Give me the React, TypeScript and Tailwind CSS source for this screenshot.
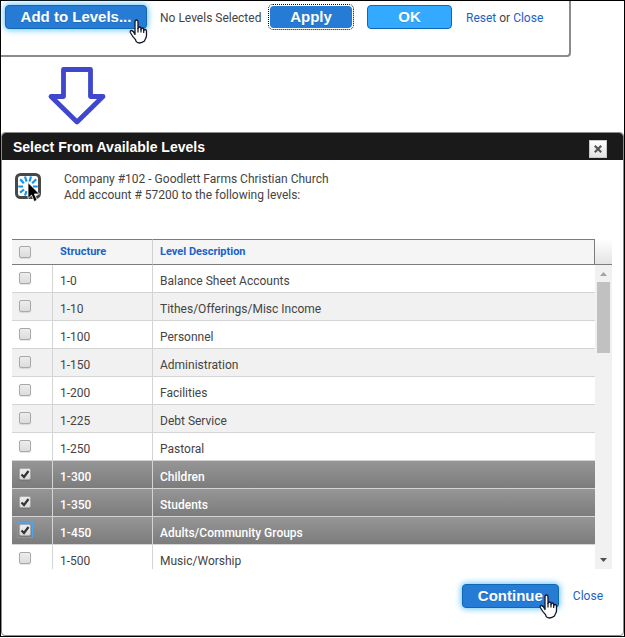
import { useState } from 'react'
import type { ReactNode } from 'react'
import clsx from 'clsx'

const LEVELS = [
  { structure: '1-0', description: 'Balance Sheet Accounts' },
  { structure: '1-10', description: 'Tithes/Offerings/Misc Income' },
  { structure: '1-100', description: 'Personnel' },
  { structure: '1-150', description: 'Administration' },
  { structure: '1-200', description: 'Facilities' },
  { structure: '1-225', description: 'Debt Service' },
  { structure: '1-250', description: 'Pastoral' },
  { structure: '1-300', description: 'Children' },
  { structure: '1-350', description: 'Students' },
  { structure: '1-450', description: 'Adults/Community Groups' },
  { structure: '1-500', description: 'Music/Worship' },
]

const BUTTON =
  'relative rounded border text-center font-["Liberation_Sans",Arial,sans-serif] text-[15px] leading-[22px] font-bold text-white text-shadow-2xs'
const GLOW = 'shadow-[0_0_6px_1px_#6cc4ff]'

function HandCursor({ className }: { className: string }) {
  return (
    <svg className={clsx('pointer-events-none absolute h-[25px] w-[19px]', className)} viewBox="0 0 19 25" aria-hidden="true">
      <path
        d="M6 15.5V3Q6 1 7.5 1T9 3v6.5Q9 8 10.5 8T12 9.5v1Q12 9 13.3 9t1.4 1.7v1q.2-1.2 1.4-1.2t1.4 1.5v4.5c0 3-1.8 3.6-2 5.6Q13 24 10.5 24T7 22.200c0-2-2.200-3-3.500-5.200L1.300 13.500Q.8 11.500 2.500 11.500q2 .3 3.500 4z"
        fill="#fff"
        stroke="#15152b"
        strokeWidth="1.300"
        strokeLinejoin="round"
      />
      <path d="M9 9v4.500M12 10v3.500M14.700 11v3" stroke="#15152b" strokeWidth="1.200" fill="none" />
    </svg>
  )
}

function ActionButton({ children, className }: { children: ReactNode; className?: string }) {
  return (
    <button type="button" className={clsx(BUTTON, className)}>
      {children}
    </button>
  )
}

function TextLink({ children }: { children: ReactNode }) {
  return (
    <a href="#" className="text-[#1a62c8]">
      {children}
    </a>
  )
}

function Checkbox({ label, checked, focused, onChange }: {
  label: string
  checked: boolean
  focused?: boolean
  onChange: () => void
}) {
  return (
    <span className={clsx('relative block size-3', focused && 'outline outline-offset-1 outline-[#4ba5ee]')}>
      <input
        type="checkbox"
        aria-label={label}
        checked={checked}
        onChange={onChange}
        className="block size-3 appearance-none rounded-xs border border-[#a9a9a9] bg-linear-to-b from-[#ededed] to-[#dcdcdc] shadow-[0_1px_1px_#0000001a]"
      />
      {checked && (
        <svg className="pointer-events-none absolute inset-0 size-3" viewBox="0 0 12 12" aria-hidden="true">
          <path d="M2.500 6.500 5 9l4.500-6" fill="none" stroke="#333" strokeWidth="2.200" />
        </svg>
      )}
    </span>
  )
}

function DownArrow() {
  return (
    <svg className="h-[60px] w-[62px]" viewBox="0 0 62 60" aria-hidden="true">
      <path d="M18.500 3.500h27v27H58L32 56 6 30.500h12.500z" fill="none" stroke="#3f48cc" strokeWidth="4.800" strokeLinejoin="round" />
    </svg>
  )
}

function LoadingIcon() {
  return (
    <svg className="h-[30px] w-[26px]" viewBox="0 0 26 30" aria-hidden="true">
      <rect x="1.500" y="1.500" width="23" height="23" rx="4" fill="#fff" stroke="#484848" strokeWidth="3" />
      <path
        d="M11.500 8.500 10 3.500M14.500 8.500 16 3.500M8.800 10.300 5.200 6.300M17.200 10.300l4-4M8 13.500H3.300M18 13.500h4.700M9 16.500l-4 3.200M11.500 18l-1.500 4.500"
        stroke="#0c93f2"
        strokeWidth="2.200"
      />
      <path d="M13 9.500v16l3.600-3.400 2.600 6.400 2.900-1.200-2.700-6.300h5.100z" fill="#000" stroke="#fff" strokeWidth="0.800" />
    </svg>
  )
}

function ScrollBar() {
  return (
    <div className="flex w-[17px] flex-col" aria-hidden="true">
      <div className="h-[26px] border-b border-[#7c7c7c] bg-linear-to-b from-white to-[#e4e4e4]" />
      <div className="flex flex-1 flex-col items-center justify-between bg-[#f1f1f1]">
        <div className="flex w-full flex-col items-center">
          <svg className="h-[17px] w-[17px]" viewBox="0 0 17 17">
            <path d="M5 11h7L8.500 7z" fill="#a3a3a3" />
          </svg>
          <div className="h-[71px] w-[13px] bg-[#c1c1c1]" />
        </div>
        <svg className="h-[17px] w-[17px]" viewBox="0 0 17 17">
          <path d="M5 6h7l-3.500 4z" fill="#505050" />
        </svg>
      </div>
    </div>
  )
}

function LevelTable() {
  const [selected, setSelected] = useState(['1-300', '1-350', '1-450'])
  const allSelected = selected.length === LEVELS.length

  function toggle(id: string) {
    setSelected(s => (s.includes(id) ? s.filter(x => x !== id) : [...s, id]))
  }

  return (
    <div className="mt-9 mr-[11px] ml-2.5 flex h-[330px]">
      <div className="flex-1 overflow-hidden">
        <table className="w-full table-fixed border-separate border-spacing-0 text-left">
          <thead>
            <tr className="h-[26px] bg-[#f5f5f5] text-[#1a62c8]">
              <th className="w-[41px] border-y border-[#7c7c7c] pl-[7px]">
                <Checkbox
                  label="Select all levels"
                  checked={allSelected}
                  onChange={() => setSelected(allSelected ? [] : LEVELS.map(l => l.structure))}
                />
              </th>
              <th className="w-[100px] border-y border-r border-y-[#7c7c7c] border-r-[#cfcfcf] pl-[7px] text-[11px] font-bold">Structure</th>
              <th className="border-y border-r border-[#7c7c7c] pl-[7px] text-[11px] font-bold">Level Description</th>
            </tr>
          </thead>
          <tbody>
            {LEVELS.map((level, i) => {
              const on = selected.includes(level.structure)
              return (
                <tr
                  key={level.structure}
                  className={clsx(
                    'h-7',
                    on
                      ? 'bg-linear-to-b from-[#969696] to-[#7b7b7b] font-medium text-white'
                      : i % 2 ? 'bg-[#f1f1f1]' : 'bg-white',
                  )}
                >
                  <td className="border-r border-b border-[#d4d4d4] pl-[7px] align-top">
                    <div className="pt-[7px]">
                      <Checkbox
                        label={level.description}
                        checked={on}
                        focused={level.structure === '1-450'}
                        onChange={() => toggle(level.structure)}
                      />
                    </div>
                  </td>
                  <td className="border-r border-b border-[#d4d4d4] pt-1 pl-[7px]">{level.structure}</td>
                  <td className="border-b border-[#d4d4d4] pt-1 pl-[7px]">{level.description}</td>
                </tr>
              )
            })}
          </tbody>
        </table>
      </div>
      <ScrollBar />
    </div>
  )
}

export default function App() {
  return (
    <main className='border border-black bg-white font-["Roboto","Open_Sans",sans-serif] text-xs text-[#444]'>
      {/* Action bar */}
      <div className="mr-[53px] flex h-14 items-start rounded-br border-r-2 border-b-2 border-[#8c8c8c] pt-1 pl-1">
        <ActionButton className={clsx('w-[142px] border-[#0d69b5] bg-[#267bd4]', GLOW)}>
          Add to Levels...
          <HandCursor className="-right-0.5 -bottom-4" />
        </ActionButton>
        <span className="ml-[13px] w-[109px] pt-[5px]">No Levels Selected</span>
        <ActionButton className="w-[84px] border-white bg-[#267bd4] bg-clip-padding outline outline-dotted outline-black">
          Apply
        </ActionButton>
        <ActionButton className="ml-3.5 w-[85px] border-[#0d69b5] bg-[#33aaff]">OK</ActionButton>
        <span className="ml-3.5 pt-[5px]">
          <TextLink>Reset</TextLink> or <TextLink>Close</TextLink>
        </span>
      </div>

      <div className="flex h-[75px] items-start pt-[9px] pl-11">
        <DownArrow />
      </div>

      {/* Level picker */}
      <section className="rounded border border-[#8c8c8c]">
        <header className="flex h-[27px] items-center justify-between rounded-t-sm bg-[#1a1a1a] pr-4 pl-[11px]">
          <h1 className='font-["Liberation_Sans",Arial,sans-serif] text-sm font-bold text-white'>Select From Available Levels</h1>
          <button
            type="button"
            aria-label="Close dialog"
            className="mt-1 flex size-[18px] items-center justify-center border border-[#c8c8c8] bg-linear-to-b from-white to-[#e2e2e2]"
          >
            <svg className="size-2" viewBox="0 0 8 8" aria-hidden="true">
              <path d="m.8.8 6.400 6.400M7.200.8.8 7.200" stroke="#555" strokeWidth="2.200" />
            </svg>
          </button>
        </header>

        <div className="flex items-start gap-[23px] pt-[11px] pl-[13px]">
          <div className="pt-0.5">
            <LoadingIcon />
          </div>
          <p>
            Company #102 - Goodlett Farms Christian Church
            <br />
            Add account # 57200 to the following levels:
          </p>
        </div>

        <LevelTable />

        <footer className="flex items-center justify-end gap-3.5 pt-[15px] pr-5 pb-[27px]">
          <ActionButton className={clsx('w-[97px] border-[#0d69b5] bg-[#267bd4]', GLOW)}>
            Continue
            <HandCursor className="right-0 -bottom-3" />
          </ActionButton>
          <TextLink>Close</TextLink>
        </footer>
      </section>
    </main>
  )
}
